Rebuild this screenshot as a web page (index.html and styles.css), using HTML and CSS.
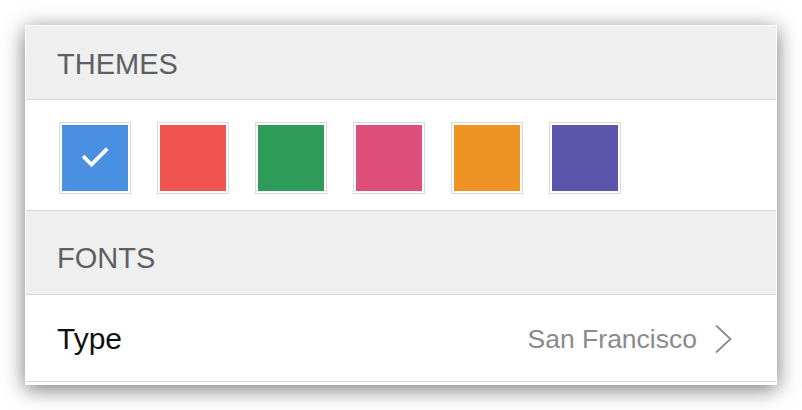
FILE: index.html
```html
<!DOCTYPE html>
<html>
<head>
<meta charset="utf-8">
<link rel="stylesheet" href="styles.css">
</head>
<body>
<div class="panel">
  <div class="section-header first">THEMES</div>
  <div class="swatches">
    <div class="swatch selected"><div class="fill blue">
      <svg class="check" viewBox="0 0 66 66" width="66" height="66"><path d="M22.5 32.5 L29.5 39.5 L44 25" fill="none" stroke="#fff" stroke-width="3.8" stroke-linecap="square" stroke-linejoin="miter"/></svg>
    </div></div>
    <div class="swatch"><div class="fill red"></div></div>
    <div class="swatch"><div class="fill green"></div></div>
    <div class="swatch"><div class="fill pink"></div></div>
    <div class="swatch"><div class="fill orange"></div></div>
    <div class="swatch"><div class="fill purple"></div></div>
  </div>
  <div class="section-header second">FONTS</div>
  <div class="row">
    <span class="label">Type</span>
    <span class="value">San Francisco</span>
    <svg class="chevron" viewBox="0 0 19 30" width="19" height="30"><path d="M2 1.5 L16.5 15 L2 28.5" fill="none" stroke="#8b8b8f" stroke-width="1.8"/></svg>
  </div>
</div>
</body>
</html>
```
FILE: styles.css
```css
html, body {
  margin: 0;
  padding: 0;
  background: #ffffff;
}
body {
  padding: 25px;
  font-family: "Liberation Sans", Arial, sans-serif;
}
.panel {
  width: 750px;
  border: 1px solid #ffffff;
  background: #ffffff;
  box-shadow: 0 4px 20px rgba(0, 0, 0, 0.55);
  padding-bottom: 2px;
}
.section-header {
  background: #efefef;
  color: #5e5e63;
  font-size: 29px;
  line-height: 34px;
  padding-left: 31px;
  border-bottom: 1px solid #d6d6d6;
}
.section-header.first {
  padding-top: 21px;
  padding-bottom: 18px;
}
.section-header.second {
  padding-top: 30px;
  padding-bottom: 19px;
}
.swatches {
  display: flex;
  gap: 26px;
  padding: 22px 0 16px 33px;
  border-bottom: 1px solid #d6d6d6;
}
.swatch {
  width: 66px;
  height: 66px;
  padding: 2px;
  border: 1px solid #d9d9d9;
  background: #fff;
}
.fill {
  width: 66px;
  height: 66px;
}
.check {
  display: block;
}
.blue { background: #4a90e2; }
.red { background: #ef5451; }
.green { background: #2e9b59; }
.pink { background: #df4f7c; }
.orange { background: #f09325; }
.purple { background: #5b55ac; }
.row {
  display: flex;
  align-items: center;
  padding: 26px 43px 24px 31px;
  border-bottom: 1px solid #d6d6d6;
  line-height: 36px;
}
.label {
  font-size: 30px;
  color: #111111;
  flex: 1;
}
.value {
  font-size: 26.5px;
  color: #8a8a8e;
  margin-right: 17px;
}
.chevron {
  display: block;
}
```
